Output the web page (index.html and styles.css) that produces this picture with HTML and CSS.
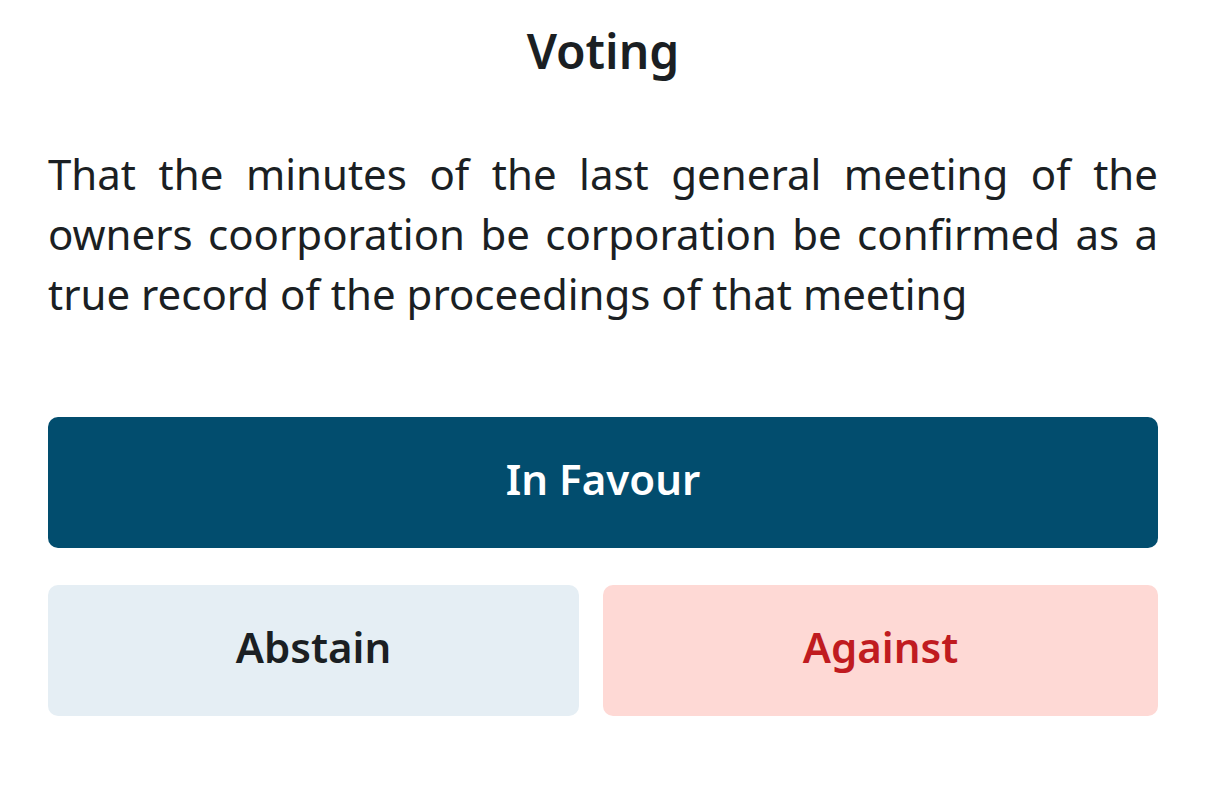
FILE: index.html
```html
<!DOCTYPE html>
<html lang="en">
<head>
	<meta charset="UTF-8">
	<title>Voting</title>
	<link rel="stylesheet" href="styles.css">
</head>
<body>
	<div class="vote_con">
		<h1 class="title">Voting</h1>
		<p class="motion">That the minutes of the last general meeting of the owners coorporation be corporation be confirmed as a true record of the proceedings of that meeting</p>
		<div class="btns">
			<div class="btn favour">In Favour</div>
			<div class="btn_row">
				<div class="btn abstain">Abstain</div>
				<div class="btn against">Against</div>
			</div>
		</div>
	</div>
</body>
</html>
```

FILE: styles.css
```css
*{
	margin:0;
	padding:0;
}

body{
	background-color:#fff;
	font-family:'Noto Sans', 'Open Sans', sans-serif;
	color:#1b1f23;
}

.vote_con{
	padding:18px 48px 0;
}

.title{
	font-size:48px;
	line-height:66px;
	font-weight:600;
	text-align:center;
}

.motion{
	margin-top:60px;
	font-size:42px;
	line-height:60px;
	text-align:justify;
}

.btns{
	margin-top:93px;
	display:flex;
	flex-direction:column;
	gap:37px;
}

.btn_row{
	display:flex;
	gap:24px;
}

.btn{
	height:131px;
	box-sizing:border-box;
	padding-bottom:8px;
	border-radius:10px;
	display:flex;
	align-items:center;
	justify-content:center;
	font-size:42px;
	font-weight:600;
}

/* 两个按钮宽度不一样，左边窄一点 */
.abstain{
	flex:531 1 0;
	background-color:#e5eef4;
	color:#1b1f23;
}

.against{
	flex:555 1 0;
	background-color:#fed9d5;
	color:#c01b20;
}

.favour{
	background-color:#024d6e;
	color:#fff;
}
```
